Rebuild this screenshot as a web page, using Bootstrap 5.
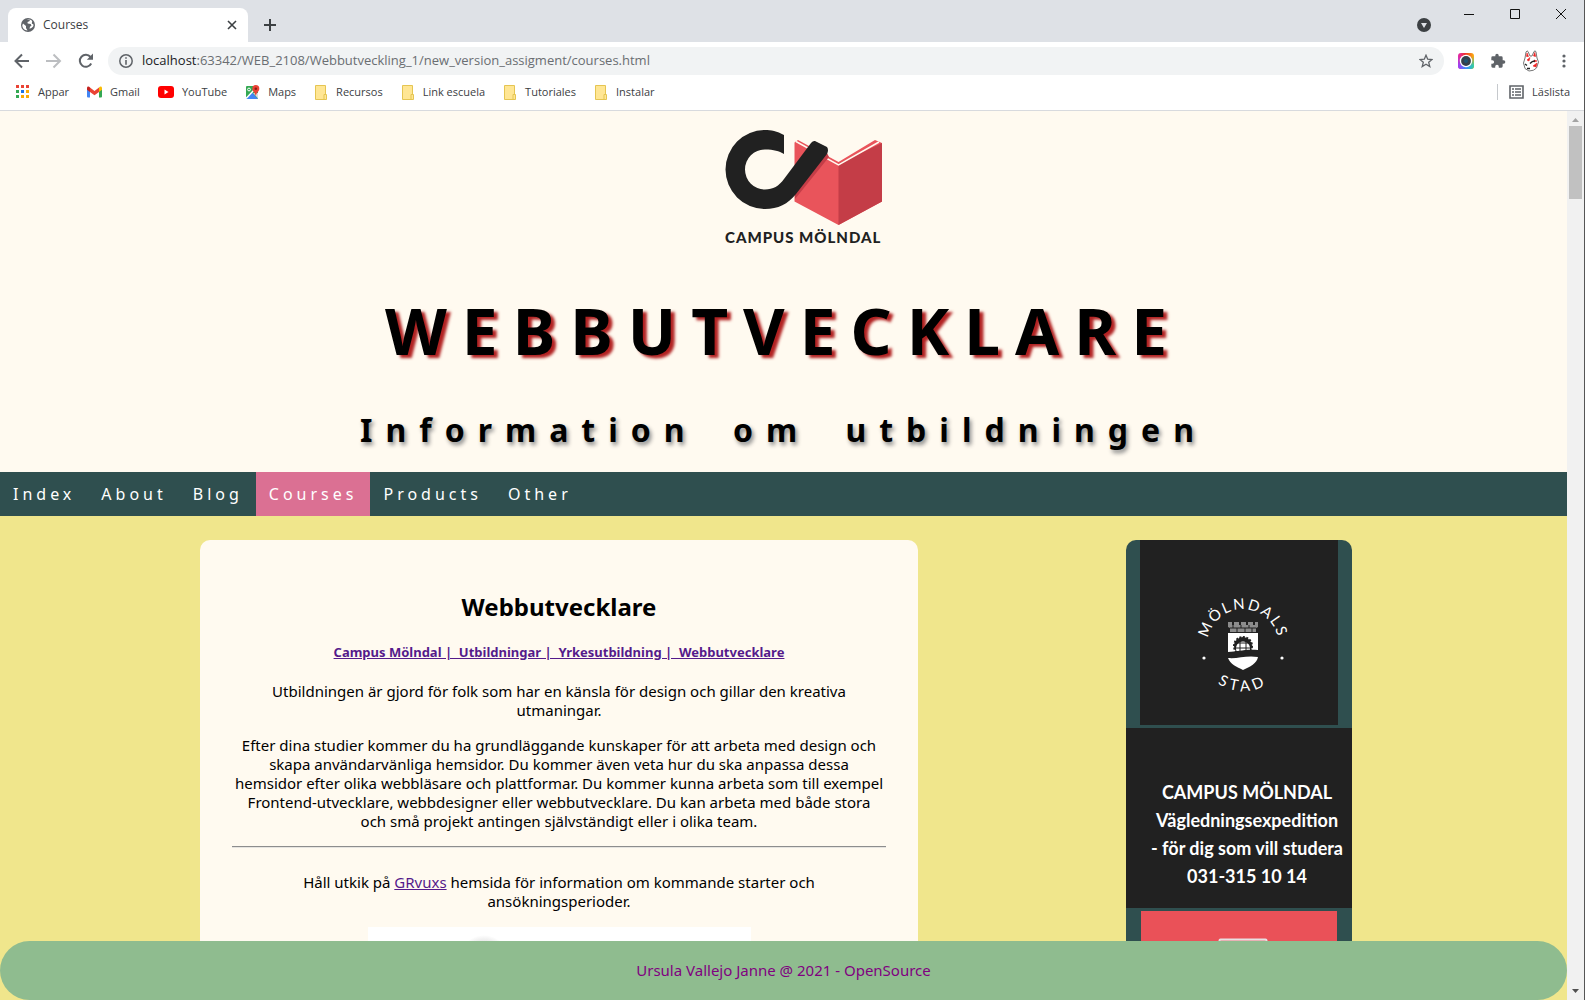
<!DOCTYPE html>
<html lang="sv">
<head>
<meta charset="utf-8">
<meta name="viewport" content="width=device-width, initial-scale=1">
<title>Courses</title>
<link href="https://cdn.jsdelivr.net/npm/bootstrap@5.3.0/dist/css/bootstrap.min.css" rel="stylesheet">
<style>
  html, body { height: 100%; }
  body { font-family: "Open Sans", "Noto Sans", sans-serif; font-size: 12px; color: #3c4043; overflow: hidden; }
  svg { display: block; flex: none; }
  .window-frame { height: 100vh; border-right: 1px solid #555; }
  .icon-btn { border: 0; background: none; padding: 0; color: #5f6368; }

  /* browser chrome */
  .tab-strip { height: 42px; background: #dee1e6; padding: 8px 0 0 8px; }
  .browser-tab { width: 240px; height: 34px; background: #fff; border-radius: 8px 8px 0 0; padding: 0 10px 0 13px; }
  .window-controls { height: 12px; gap: 34px; padding-right: 17px; }
  .toolbar { height: 37px; padding: 0 12px 0 14px; }
  .nav-icons { gap: 16px; margin-right: 14px; }
  .address { height: 28px; border-radius: 14px; background: #f1f3f4; padding: 0 11px; gap: 9px; }
  .address input { border: 0; background: none; outline: 0; padding: 0; font-size: 13px; color: #6a6e72; min-width: 0; }
  .address label { color: #202124; font-size: 13px; }
  .extensions { gap: 16px; margin-left: 14px; }
  .bookmarks { height: 32px; padding: 0 14px 5px 15px; gap: 18px; border-bottom: 1px solid #d8dade; }
  .bookmarks a { color: #3c4043; text-decoration: none; gap: 8px; font-size: 11px; line-height: 16px; }
  .reading-list { border-left: 1px solid #c6c9cd; padding-left: 11px; }

  /* scroll bar */
  .scroll-track { width: 17px; background: #f1f1f1; padding: 6px 2px; }
  .scroll-thumb { height: 73px; background: #c1c1c1; }

  /* web page */
  .web-page { font-family: "Noto Sans", sans-serif; font-size: 15px; line-height: 19px; color: #000; background: #f0e68c; overflow: hidden; }
  .site-header { background: #fffaf0; height: 361px; padding-top: 18px; padding-left: 41px; }
  .brand-logo { margin: 0 auto; }
  .site-header h1 { font-size: 64px; line-height: 78px; font-weight: 700; letter-spacing: 15px; margin: 45px 0 0 -41px; text-shadow: 4px 3px 3px #b22222; }
  .site-header h2 { font-size: 32px; line-height: 38px; font-weight: 700; letter-spacing: 13px; word-spacing: 14px; margin: 41px 0 0 -41px; text-shadow: 2px 3px 4px #888; }
  .site-nav { background: #2f4f4f; }
  .site-nav a { color: #fff; text-decoration: none; letter-spacing: 4px; font-size: 16px; line-height: 20px; padding: 12px 13px; }
  .site-nav a.current { background: #db7093; }
  .content-grid { display: grid; grid-template-columns: 200fr 718fr 208fr 226fr 215fr; padding-top: 24px; }
  .course { grid-column: 2; background: #fffaf0; border-radius: 10px; padding: 52px 32px 32px; text-align: center; }
  .course h2 { font-size: 24px; line-height: 30px; font-weight: 700; margin: 0 0 20px; }
  .course h5 { font-size: 13px; line-height: 20px; font-weight: 700; margin: 0 0 20px; }
  .course a { color: #551a8b; }
  .course p { margin: 0 0 16px; }
  .course hr { margin: 0 0 25px; border-top: 1px solid #8d8d8d; border-bottom: 1px solid #e6e4e0; opacity: 1; margin-top: -1px; }
  .notice { padding: 0 48px; }
  .photo { width: 383px; height: 240px; background: #fff; margin: 0 auto; }
  .side { grid-column: 4; background: #2f4f4f; border-radius: 10px 10px 0 0; overflow: hidden; }
  .city { background: #212121; margin: 0 14px 3px; height: 185px; padding: 52px 0 0 8px; }
  .contact { background: #212121; color: #fff; height: 180px; padding: 50px 0 0 16px; margin-bottom: 3px; font: 700 18px/28px Lato, sans-serif; white-space: nowrap; }
  .promo { background: #ea5158; margin: 0 15px; height: 200px; padding: 27px 0 0 8px; }
  .page-footer { position: absolute; left: 0; right: 0; bottom: 0; height: 59px; border-radius: 30px; background: #8fbc8f; color: #800080; }
</style>
</head>
<body>
<div class="window-frame d-flex flex-column bg-white">
  <div class="tab-strip d-flex justify-content-between flex-shrink-0">
    <div class="d-flex">
      <div class="browser-tab d-flex align-items-center">
        <svg width="14" height="14" viewBox="0 0 14 14"><circle cx="7" cy="7" r="7" fill="#5f6368"/><path d="M2 5.500 5 8v2l1.500 2.400C3.500 12.500 1.300 10 1.300 7.200zM6 1.500l3 .2-.6 1.500L6.500 4l.2 1.500 3 .5.8 1.500-1.500 1.300-.5 2C11.500 10 12.700 8.500 12.500 6.500L10.800 5.500 11.200 3C9.500 1.300 7.500 1 6 1.500z" fill="#fff"/></svg>
        <span class="ms-2 flex-grow-1">Courses</span>
        <button class="icon-btn" aria-label="Stäng flik"><svg width="12" height="12" viewBox="0 0 12 12" stroke="#3c4043" stroke-width="1.600"><path d="M2 2l8 8M10 2l-8 8"/></svg></button>
      </div>
      <button class="icon-btn ms-3" aria-label="Ny flik"><svg width="12" height="12" viewBox="0 0 12 12" stroke="#3c4043" stroke-width="2"><path d="M6 0v12M0 6h12"/></svg></button>
    </div>
    <div class="d-flex">
      <button class="icon-btn me-4 pe-2" aria-label="Sök flikar"><svg width="14" height="14" viewBox="0 0 14 14"><circle cx="7" cy="7" r="7" fill="#3c4043"/><path d="M4 5h6L7 10z" fill="#dee1e6"/></svg></button>
      <div class="window-controls d-flex align-items-center">
        <button class="icon-btn" aria-label="Minimera"><svg width="12" height="12" stroke="#111"><path d="M1 6.500h10"/></svg></button>
        <button class="icon-btn" aria-label="Maximera"><svg width="12" height="12" stroke="#111" fill="none"><path d="M1.500 1.500h9v9h-9z"/></svg></button>
        <button class="icon-btn" aria-label="Stäng"><svg width="12" height="12" stroke="#111"><path d="M1 1l10 10M11 1L1 11"/></svg></button>
      </div>
    </div>
  </div>

  <div class="toolbar d-flex align-items-center flex-shrink-0">
    <div class="nav-icons d-flex">
      <button class="icon-btn" aria-label="Bakåt"><svg width="16" height="16" viewBox="0 0 16 16" fill="none" stroke="#5f6368" stroke-width="2"><path d="M15 8H2M8 1.500 1.500 8 8 14.500"/></svg></button>
      <button class="icon-btn" aria-label="Framåt"><svg width="16" height="16" viewBox="0 0 16 16" fill="none" stroke="#bcbec1" stroke-width="2"><path d="M0 8h14M7.500 1.500 14 8l-6.500 6.500"/></svg></button>
      <button class="icon-btn" aria-label="Läs in igen"><svg width="16" height="16" viewBox="0 0 16 16"><path d="M13.200 10.500A6 6 0 1 1 12.500 4" fill="none" stroke="#5f6368" stroke-width="2"/><path d="M15 .5v6.200H8.800z" fill="#5f6368"/></svg></button>
    </div>
    <div class="address d-flex align-items-center flex-grow-1">
      <svg width="14" height="14" viewBox="0 0 14 14"><circle cx="7" cy="7" r="6.200" fill="none" stroke="#5f6368" stroke-width="1.500"/><path d="M6.200 3.300h1.600v1.500H6.200zM6.200 6h1.600v4.700H6.200z" fill="#5f6368"/></svg>
      <div class="d-flex flex-grow-1"><label for="url">localhost</label><input id="url" class="flex-grow-1" value=":63342/WEB_2108/Webbutveckling_1/new_version_assigment/courses.html"></div>
      <button class="icon-btn" aria-label="Bokmärk"><svg width="14" height="14" viewBox="0 0 14 14" fill="none" stroke="#5f6368" stroke-width="1.300"><path d="M7 1.200 8.700 5.200l4.300.3-3.300 2.800 1.100 4.300L7 10.300l-3.800 2.300 1.100-4.300L1 5.500l4.300-.3z"/></svg></button>
    </div>
    <div class="extensions d-flex align-items-center">
      <svg width="16" height="16" viewBox="0 0 16 16"><defs><linearGradient id="rim" x1="0" y1="0" x2="1" y2="0"><stop offset="0" stop-color="#e22bb0"/><stop offset=".45" stop-color="#f0302c"/><stop offset="1" stop-color="#fbb410"/></linearGradient><linearGradient id="rim2" x1="0" y1="0" x2="1" y2="0"><stop offset="0" stop-color="#a33cf5"/><stop offset=".5" stop-color="#3b8cff"/><stop offset="1" stop-color="#2ed3a0"/></linearGradient><linearGradient id="fade" x1="0" y1="0" x2="0" y2="1"><stop offset=".2" stop-color="#000"/><stop offset=".8" stop-color="#fff"/></linearGradient><mask id="lower"><rect width="16" height="16" fill="url(#fade)"/></mask></defs><rect width="16" height="16" rx="3" fill="url(#rim)"/><rect width="16" height="16" rx="3" fill="url(#rim2)" mask="url(#lower)"/><circle cx="8" cy="8" r="6.200" fill="#fff"/><circle cx="8" cy="8" r="4.900" fill="#34404b"/><circle cx="8" cy="8" r="2" fill="#1e5474"/></svg>
      <svg width="16" height="16" viewBox="0 0 24 24"><path fill="#5f6368" d="M20.500 11H19V7a2 2 0 0 0-2-2h-4V3.500a2.500 2.500 0 0 0-5 0V5H4a2 2 0 0 0-2 2v3.800h1.500a2.700 2.700 0 0 1 0 5.400H2V20a2 2 0 0 0 2 2h3.800v-1.500a2.700 2.700 0 0 1 5.400 0V22H17a2 2 0 0 0 2-2v-4h1.500a2.500 2.500 0 0 0 0-5z"/></svg>
      <svg width="18" height="22" viewBox="0 0 18 22"><path d="M3 8 4 2Q5 0 6 1.500L8 6h2l2-4.500Q13.500 0 14 2l1 6 1.500 4-2 6Q12 21 7 21l-4-2.500L1.500 13z" fill="#fff" stroke="#777"/><path d="M4.500 6.500 5 3l1.500 3.500zM11.500 6 12.800 2.500l.8 4zM5 10l3-2.500L7 11zM11 16l4-3-1 4zM12 10l3 1-3 1z" fill="#ee2020" stroke="#ee2020" stroke-width=".6"/><path d="M8 13.500Q10 11 13 11M3 14 5 15.500M5 18.500h3" stroke="#222" stroke-width="1.300" fill="none"/></svg>
      <button class="icon-btn" aria-label="Meny"><svg width="16" height="16" viewBox="0 0 16 16" fill="#5f6368"><circle cx="8" cy="3" r="1.600"/><circle cx="8" cy="8" r="1.600"/><circle cx="8" cy="13" r="1.600"/></svg></button>
    </div>
  </div>

  <nav class="bookmarks d-flex align-items-center flex-shrink-0">
    <a href="#" class="d-flex align-items-center"><svg width="15" height="14" viewBox="0 0 15 14"><path d="M1 0h3v3H1zM6 0h3v3H6zM11 0h3v3h-3z" fill="#ea4335"/><path d="M1 5h3v3H1zM1 10h3v3H1z" fill="#34a853"/><path d="M6 5h3v3H6z" fill="#1a73e8"/><path d="M11 5h3v3h-3zM6 10h3v3H6zM11 10h3v3h-3z" fill="#fbaa05"/></svg>Appar</a>
    <a href="#" class="d-flex align-items-center"><svg width="15" height="12" viewBox="0 0 15 12"><path d="M0 2h3v9.500H1a1 1 0 0 1-1-1z" fill="#4285f4"/><path d="M12 2h3v8.500a1 1 0 0 1-1 1h-2z" fill="#34a853"/><path d="M3 1.500 7.500 5 12 1.500V6L7.500 9.300 3 6z" fill="#ea4335"/><path d="M0 2.200C0 .5 1.600 0 3 1.400V6L0 3.800z" fill="#c5221f"/><path d="M15 2.200C15 .5 13.400 0 12 1.400V6l3-2.200z" fill="#fbbc04"/></svg>Gmail</a>
    <a href="#" class="d-flex align-items-center"><svg width="16" height="12" viewBox="0 0 16 12"><rect width="16" height="12" rx="3" fill="#f00"/><path d="M6.500 3.500v5L10.500 6z" fill="#fff"/></svg>YouTube</a>
    <a href="#" class="d-flex align-items-center"><svg width="15" height="15" viewBox="0 0 15 15"><rect x="1" y="1" width="12" height="13" rx="1" fill="#34a853"/><path d="M7 7.500 1 14h12z" fill="#4285f4"/><path d="M10 4 1 13.500" stroke="#fff" stroke-width="1.500"/><path d="M8 8l5 5.500V8z" fill="#dadce0"/><path d="M10.800 0a3.600 3.600 0 0 0-3.500 3.700c0 2.500 2.800 3.600 3.500 7.300.7-3.700 3.500-4.800 3.500-7.300A3.600 3.600 0 0 0 10.800 0z" fill="#ea4335"/><circle cx="10.800" cy="3.700" r="1.300" fill="#8c1b13"/><circle cx="4" cy="4.500" r="1.400" fill="none" stroke="#fff"/></svg>Maps</a>
    <a href="#" class="d-flex align-items-center"><svg width="14" height="15" viewBox="0 0 14 15"><path d="M1.500.5h10v14h-10z" fill="#ffe694" stroke="#e5c552"/><path d="M10 9.500h2.500v5H10z" fill="#ffe694" stroke="#e5c552"/></svg>Recursos</a>
    <a href="#" class="d-flex align-items-center"><svg width="14" height="15" viewBox="0 0 14 15"><path d="M1.500.5h10v14h-10z" fill="#ffe694" stroke="#e5c552"/><path d="M10 9.500h2.500v5H10z" fill="#ffe694" stroke="#e5c552"/></svg>Link escuela</a>
    <a href="#" class="d-flex align-items-center"><svg width="14" height="15" viewBox="0 0 14 15"><path d="M1.500.5h10v14h-10z" fill="#ffe694" stroke="#e5c552"/><path d="M10 9.500h2.500v5H10z" fill="#ffe694" stroke="#e5c552"/></svg>Tutoriales</a>
    <a href="#" class="d-flex align-items-center"><svg width="14" height="15" viewBox="0 0 14 15"><path d="M1.500.5h10v14h-10z" fill="#ffe694" stroke="#e5c552"/><path d="M10 9.500h2.500v5H10z" fill="#ffe694" stroke="#e5c552"/></svg>Instalar</a>
    <a href="#" class="reading-list d-flex align-items-center ms-auto"><svg width="15" height="14" viewBox="0 0 15 14"><path d="M1 1h13v12H1z" fill="none" stroke="#5f6368" stroke-width="1.600"/><path d="M3 4h2M6 4h6M3 7h2M6 7h6M3 10h2M6 10h6" stroke="#5f6368" stroke-width="1.400"/></svg>Läslista</a>
  </nav>

  <div class="d-flex flex-grow-1 overflow-hidden">
    <div class="web-page position-relative flex-grow-1">
      <header class="site-header text-center">
        <svg class="brand-logo" width="160" height="118" viewBox="0 0 160 118" role="img" aria-label="Campus Mölndal">
          <path d="M70.500 13.500 74 11l40.500 22L151 11l7 3v58.500L114.500 96 70.500 72.500z" fill="#e9545b"/>
          <path d="M114.500 34.500 158 14v58.500L114.500 96z" fill="#c43d47"/>
          <path d="M72 12.500 114.500 36 155 13" fill="none" stroke="#fffaf0" stroke-width="1.500"/>
          <path d="M105 28 71 70v-9l32-37z" fill="#c43d47"/>
          <path d="M60 6C53 2 47 1 41 1A39.500 39.500 0 0 0 41 80C54 80 64 75 72 65L103 25Q105 21 103 18L91 12Q89 11.500 87 14L60 50C55 57 49 60.500 41 60.500A20 20 0 0 1 41 20.500C50 20.500 55 22 60 25z" fill="#212121"/>
          <text x="1" y="114" font-family="Lato" font-weight="900" font-size="15" letter-spacing="1" fill="#212121">CAMPUS MÖLNDAL</text>
        </svg>
        <h1>WEBBUTVECKLARE</h1>
        <h2>Information om utbildningen</h2>
      </header>
      <nav class="site-nav d-flex">
        <a href="#">Index</a><a href="#">About</a><a href="#">Blog</a><a href="#" class="current">Courses</a><a href="#">Products</a><a href="#">Other</a>
      </nav>
      <main class="content-grid">
        <article class="course">
          <h2>Webbutvecklare</h2>
          <h5><a href="#">Campus Mölndal |&nbsp; Utbildningar |&nbsp; Yrkesutbildning |&nbsp; Webbutvecklare</a></h5>
          <p>Utbildningen är gjord för folk som har en känsla för design och gillar den kreativa<br>utmaningar.</p>
          <p>Efter dina studier kommer du ha grundläggande kunskaper för att arbeta med design och<br>skapa användarvänliga hemsidor. Du kommer även veta hur du ska anpassa dessa<br>hemsidor efter olika webbläsare och plattformar. Du kommer kunna arbeta som till exempel<br>Frontend-utvecklare, webbdesigner eller webbutvecklare. Du kan arbeta med både stora<br>och små projekt antingen självständigt eller i olika team.</p>
          <hr>
          <p class="notice">Håll utkik på <a href="#">GRvuxs</a> hemsida för information om kommande starter och ansökningsperioder.</p>
          <div class="photo"><svg width="383" height="40"><defs><radialGradient id="lamp"><stop offset=".6" stop-color="#ddd"/><stop offset="1" stop-color="#fff"/></radialGradient></defs><circle cx="116" cy="33" r="25" fill="url(#lamp)"/><circle cx="116" cy="30" r="15" fill="#f7f7f7"/></svg></div>
        </article>
        <aside class="side">
          <div class="city">
            <svg class="mx-auto" width="104" height="104" viewBox="0 0 104 104" role="img" aria-label="Mölndals stad" fill="#fff" font-family="Lato" font-size="15">
              <defs><path id="arc-top" d="M17 58.700A35.500 35.500 0 1 1 87 58.700"/><path id="arc-low" d="M5.500 52.500A46.500 46.500 0 0 0 98.500 52.500"/></defs>
              <text letter-spacing="2"><textPath href="#arc-top" startOffset="50%" text-anchor="middle">MÖLNDALS</textPath></text>
              <text letter-spacing="4"><textPath href="#arc-low" startOffset="50%" text-anchor="middle">STAD</textPath></text>
              <circle cx="13" cy="66" r="1.600"/><circle cx="91" cy="66" r="1.600"/>
              <path d="M37 30h4v3h2v-3h5v3h2v-3h5v3h2v-3h5v3h2v-3h3v5l-2 1v4H39v-4l-2-1z" fill="#8c8c8c"/><path d="M39 36h26M42 33v3M50 33v3M58 33v3M46 36v4M54 36v4M61 36v4" stroke="#212121"/>
              <path d="M37 41h30v18c-10-1-14 2-30 1z"/>
              <circle cx="52" cy="54" r="9" fill="#212121" stroke="#212121" stroke-width="2" stroke-dasharray="2 1.500"/>
              <path d="M45.500 59a7 7 0 1 1 13 0z"/><path d="M49 47v13M55 47v13M44 51h16M44 56h16" stroke="#212121"/>
              <path d="M37 60c10 0 15-3 30-2v7c-12-2-20 2-30 1z" fill="#212121"/>
              <path d="M37 66c10 1 18-3 30-1-1 6-8 10-15 13-6-3-13-6-15-12z"/>
            </svg>
          </div>
          <div class="contact text-center">CAMPUS MÖLNDAL<br>Vägledningsexpedition<br>- för dig som vill studera<br>031-315 10 14</div>
          <div class="promo"><svg class="mx-auto" width="50" height="40"><rect x="1.500" y="1.500" width="47" height="37" rx="1" fill="#e98288" stroke="#e8e0e2" stroke-width="2"/></svg></div>
        </aside>
      </main>
      <footer class="page-footer d-flex align-items-center justify-content-center">Ursula Vallejo Janne @ 2021 - OpenSource</footer>
    </div>
    <div class="scroll-track d-flex flex-column flex-shrink-0">
      <svg class="mx-auto" width="7" height="5"><path d="M0 5 3.500 1 7 5z" fill="#a3a3a3"/></svg>
      <div class="scroll-thumb mt-1 flex-shrink-0"></div>
      <svg class="mx-auto mt-auto" width="7" height="5"><path d="M0 0 3.500 4 7 0z" fill="#505050"/></svg>
    </div>
  </div>
</div>
<script src="https://cdn.jsdelivr.net/npm/bootstrap@5.3.0/dist/js/bootstrap.bundle.min.js"></script>
</body>
</html>
